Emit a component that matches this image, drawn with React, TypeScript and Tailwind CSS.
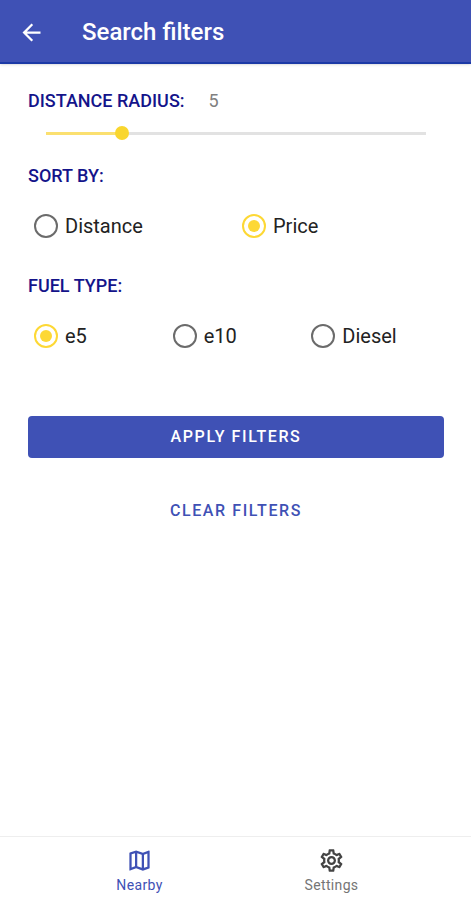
import { useState } from "react";
import type { ReactNode } from "react";
import { MdArrowBack, MdOutlineMap, MdOutlineSettings } from "react-icons/md";

const MAX_RADIUS = 25;

function SectionTitle({ children }: { children: ReactNode }) {
  return <h2 className="text-lg leading-6 font-medium text-[#14148a]">{children}</h2>;
}

type RadioProps = {
  name: string;
  label: string;
  value: string;
  onSelect: (label: string) => void;
};

function Radio({ name, label, value, onSelect }: RadioProps) {
  return (
    <label className="flex h-12 flex-1 items-center gap-[7px] pl-[6px] text-xl leading-6 text-[#222222]">
      <input
        type="radio"
        name={name}
        checked={value === label}
        onChange={() => onSelect(label)}
        className="size-6 shrink-0 appearance-none rounded-full border-2 border-[#6b6b6b] bg-clip-content p-1 checked:border-[#fdd835] checked:bg-[#fdd835]"
      />
      {label}
    </label>
  );
}

export default function App() {
  const [radius, setRadius] = useState(5);
  const [sortBy, setSortBy] = useState("Price");
  const [fuel, setFuel] = useState("e5");
  const percent = (radius / MAX_RADIUS) * 100;

  const clear = () => {
    setRadius(5);
    setSortBy("Price");
    setFuel("e5");
  };

  return (
    <div className="flex min-h-screen flex-col bg-white font-[Roboto,sans-serif]">
      <header className="flex h-16 items-center gap-[37px] border-b-2 border-[#1c3aa6] bg-[#3f51b5] px-[18px] pt-[2px] text-white shadow-sm">
        <button type="button" aria-label="Back">
          <MdArrowBack className="size-[27px]" />
        </button>
        <h1 className="text-2xl leading-8 font-medium">Search filters</h1>
      </header>

      <main className="flex flex-1 flex-col pt-[25px] pr-[27px] pl-7">
        <div className="flex items-center gap-6">
          <SectionTitle>
            <label htmlFor="radius">DISTANCE RADIUS:</label>
          </SectionTitle>
          <output htmlFor="radius" className="text-lg leading-6 text-[#808080]">
            {radius}
          </output>
        </div>
        <div className="flex h-10 items-center px-[11px]">
          <input
            id="radius"
            type="range"
            min={0}
            max={MAX_RADIUS}
            value={radius}
            onChange={(event) => setRadius(Number(event.target.value))}
            style={{
              backgroundImage: `linear-gradient(to right, #fbe070 ${percent}%, #e2e2e2 ${percent}%)`,
            }}
            className="h-[14px] w-full appearance-none bg-[length:calc(100%-14px)_3px] bg-center bg-no-repeat [&::-webkit-slider-thumb]:size-[14px] [&::-webkit-slider-thumb]:appearance-none [&::-webkit-slider-thumb]:rounded-full [&::-webkit-slider-thumb]:bg-[#f9d62e]"
          />
        </div>

        <section className="mt-[11px]">
          <SectionTitle>SORT BY:</SectionTitle>
          <div className="mt-[14px] flex">
            <Radio name="sort" label="Distance" value={sortBy} onSelect={setSortBy} />
            <Radio name="sort" label="Price" value={sortBy} onSelect={setSortBy} />
          </div>
        </section>

        <section className="mt-6">
          <SectionTitle>FUEL TYPE:</SectionTitle>
          <div className="mt-[14px] flex">
            <Radio name="fuel" label="e5" value={fuel} onSelect={setFuel} />
            <Radio name="fuel" label="e10" value={fuel} onSelect={setFuel} />
            <Radio name="fuel" label="Diesel" value={fuel} onSelect={setFuel} />
          </div>
        </section>

        <button
          type="button"
          className="mt-14 h-[42px] rounded bg-[#3f51b5] text-base font-medium tracking-widest text-white"
        >
          APPLY FILTERS
        </button>
        <button
          type="button"
          onClick={clear}
          className="mt-8 h-[42px] rounded text-base font-medium tracking-widest text-[#3f51b5]"
        >
          CLEAR FILTERS
        </button>
      </main>

      <nav className="flex h-16 justify-center border-t border-[#eeeeee] text-sm leading-4 tracking-wide">
        <a href="#nearby" className="flex w-48 flex-col items-center gap-[3px] pt-[10px] text-[#3f51b5]">
          <MdOutlineMap className="size-[27px]" />
          Nearby
        </a>
        <a href="#settings" className="flex w-48 flex-col items-center gap-[3px] pt-[10px] text-[#757575]">
          <MdOutlineSettings className="size-[27px] text-[#444444]" />
          Settings
        </a>
      </nav>
    </div>
  );
}
